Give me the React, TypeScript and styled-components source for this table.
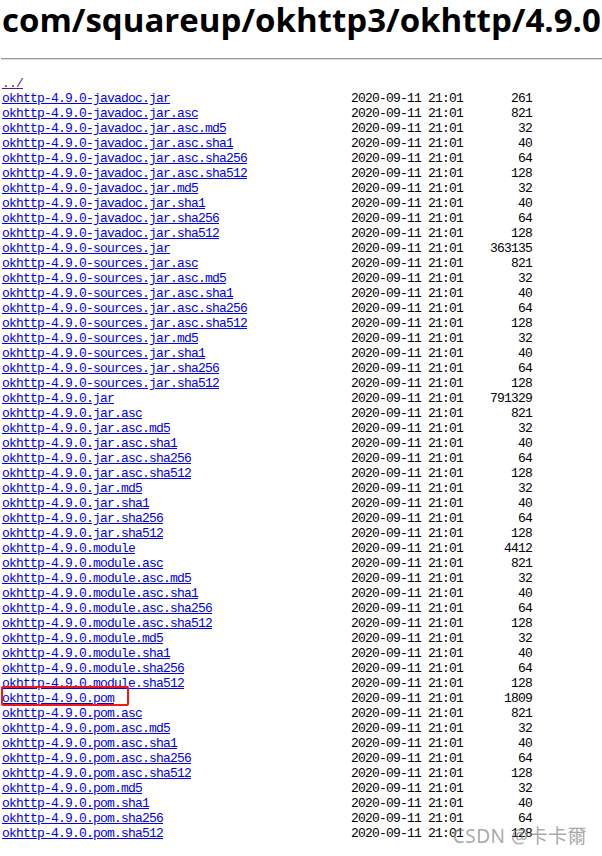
import React from "react";
import styled, { createGlobalStyle } from "styled-components";

const Global = createGlobalStyle`
  html, body { margin: 0; padding: 0; background: #fff; }
  body { font-family: "Liberation Sans", Arial, sans-serif; }
`;

const Page = styled.div`
  position: relative;
  width: 602px;
  height: 856px;
  overflow: hidden;
  padding-left: 2px;
  box-sizing: border-box;
`;

const Title = styled.h1`
  margin: 0;
  padding-top: 0;
  font-family: "Open Sans", "Liberation Sans", sans-serif;
  font-weight: 700;
  font-size: 33px;
  line-height: 40px;
  color: #000;
  white-space: nowrap;
  letter-spacing: 0;
`;

const Rule = styled.hr`
  margin: 18px 0 16px -1px;
  border: none;
  border-top: 1px solid #9a9a9a;
  border-bottom: 1px solid #dcdcdc;
  height: 0;
`;

const Listing = styled.div`
  display: flex;
  flex-direction: column;
  font-family: "Liberation Mono", "DejaVu Sans Mono", monospace;
  font-size: 13px;
  letter-spacing: -0.8px;
  line-height: 15px;
  color: #000;
`;

const Row = styled.div`
  position: relative;
  display: grid;
  grid-template-columns: 349px 112px 69px;
  height: 15px;
  white-space: nowrap;
`;

const FileLink = styled.a<{ $visited?: boolean }>`
  color: ${(p) => (p.$visited ? "#551a8b" : "#0000ee")};
  text-decoration: underline;
`;

const DateCell = styled.span``;

const SizeCell = styled.span`
  text-align: right;
`;

const Highlight = styled.span`
  position: absolute;
  left: -1px;
  top: -5px;
  width: 128px;
  height: 20px;
  border: 2.5px solid #f21818;
  border-radius: 2px;
  box-sizing: border-box;
  pointer-events: none;
`;

const Watermark = styled.div`
  position: absolute;
  right: 15px;
  bottom: 9px;
  font-family: "Noto Sans", "Noto Sans CJK SC", sans-serif;
  font-size: 19px;
  line-height: 22px;
  color: rgba(130, 130, 130, 0.7);
  letter-spacing: 0.5px;
  white-space: nowrap;
`;

const suffixGroup = (base: string, sizeMain: string) => {
  const s: [string, string][] = [
    [base, sizeMain],
    [base + ".asc", "821"],
    [base + ".asc.md5", "32"],
    [base + ".asc.sha1", "40"],
    [base + ".asc.sha256", "64"],
    [base + ".asc.sha512", "128"],
    [base + ".md5", "32"],
    [base + ".sha1", "40"],
    [base + ".sha256", "64"],
    [base + ".sha512", "128"],
  ];
  return s;
};

const files: [string, string][] = [
  ...suffixGroup("okhttp-4.9.0-javadoc.jar", "261"),
  ...suffixGroup("okhttp-4.9.0-sources.jar", "363135"),
  ...suffixGroup("okhttp-4.9.0.jar", "791329"),
  ...suffixGroup("okhttp-4.9.0.module", "4412"),
  ...suffixGroup("okhttp-4.9.0.pom", "1809"),
];

export default function App() {
  return (
    <Page>
      <Global />
      <Title>com/squareup/okhttp3/okhttp/4.9.0</Title>
      <Rule />
      <Listing>
        <Row>
          <FileLink $visited href="#">../</FileLink>
        </Row>
        {files.map(([name, size]) => (
          <Row key={name}>
            <span>
              <FileLink href="#">{name}</FileLink>
            </span>
            <DateCell>2020-09-11 21:01</DateCell>
            <SizeCell>{size}</SizeCell>
            {name === "okhttp-4.9.0.pom" && <Highlight />}
          </Row>
        ))}
      </Listing>
      <Watermark>CSDN @卡卡爾</Watermark>
    </Page>
  );
}
